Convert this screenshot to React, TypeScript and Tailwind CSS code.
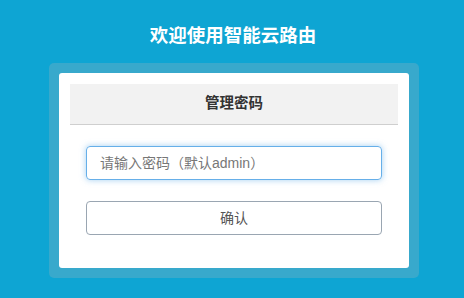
export default function App() {
  return (
    <div
      className="min-h-screen w-full bg-[#0ea5d3] pt-[22px] pb-[21px]"
      style={{ fontFamily: '"Liberation Sans", "Noto Sans CJK SC", sans-serif' }}
    >
      {/* 标题 */}
      <h1 className="text-center text-[18.5px] leading-[28px] font-bold text-white pl-[2px]">欢迎使用智能云路由</h1>

      {/* 外框 */}
      <div className="mt-[13px] ml-[49px] w-[370px] rounded-[5px] bg-[#38a9cc] p-[10px]">
        <div className="rounded-[3px] bg-white px-[11px] pt-[11px] pb-[33px]">
          <div className="flex h-[41px] items-center justify-center border-b border-[#cfcfcf] bg-[#f2f2f2]">
            <span className="text-[14.5px] font-bold text-[#333]">管理密码</span>
          </div>

          <div className="px-[16px]">
            <input
              type="password"
              placeholder="请输入密码（默认admin）"
              className="mt-[21px] block h-[34px] w-full rounded-[4px] border border-[#66afe9] px-[13px] text-[14px] text-[#555] placeholder:text-[#777] shadow-[0_0_6px_rgba(102,175,233,0.6)] outline-none"
            />
            <button className="mt-[21px] flex h-[34px] w-full items-center justify-center rounded-[4px] border border-[#9aa6b2] bg-white text-[14px] text-[#555]">
              确认
            </button>
          </div>
        </div>
      </div>
    </div>
  );
}
